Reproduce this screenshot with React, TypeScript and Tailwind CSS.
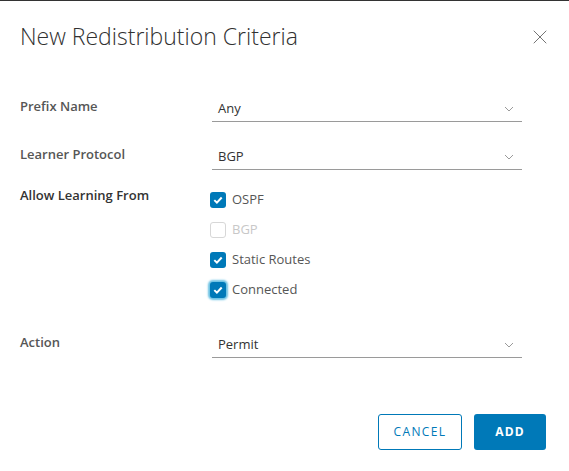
import { X } from 'lucide-react'

const font = { fontFamily: '"Open Sans", Lato, sans-serif' }

function Chevron() {
  return (
    <svg width="10" height="6" viewBox="0 0 10 6" className="text-[#9a9a9a]">
      <path d="M1 1l4 4 4-4" fill="none" stroke="currentColor" strokeWidth="1" />
    </svg>
  )
}

function Select({ value }: { value: string }) {
  return (
    <div className="flex h-[26px] w-[310px] items-center justify-between border-b border-[#9a9a9a] pl-[6px] pr-[8px] text-[13px] text-[#333]">
      <span>{value}</span>
      <Chevron />
    </div>
  )
}

function Checkbox({ label, checked, disabled, focused }: { label: string; checked?: boolean; disabled?: boolean; focused?: boolean }) {
  return (
    <div className="flex h-[30px] items-center gap-[6px]">
      <div
        className={
          'flex h-[16px] w-[16px] items-center justify-center rounded-[3px] ' +
          (checked ? 'bg-[#0079b8]' : 'border border-[#d7d7d7] bg-white') +
          (focused ? ' shadow-[0_0_2px_2px_#6bc1e3]' : '')
        }
      >
        {checked && (
          <svg width="10" height="8" viewBox="0 0 10 8">
            <path d="M1.3 4.1l2.6 2.5L8.7 1.5" fill="none" stroke="white" strokeWidth="2" />
          </svg>
        )}
      </div>
      <span className={'text-[13px] ' + (disabled ? 'text-[#c8c8c8]' : 'text-[#565656]')}>{label}</span>
    </div>
  )
}

export default function App() {
  return (
    <div className="h-[471px] w-[569px] border-t border-[#333] bg-white" style={font}>
      {/* Header */}
      <div className="flex h-[72px] items-center justify-between pl-5 pr-[17px]">
        <h2 className="-mt-[1px] text-[23px] font-light text-[#313131]">New Redistribution Criteria</h2>
        <X className="h-[24px] w-[24px] text-[#747474]" strokeWidth={1} />
      </div>

      {/* Form */}
      <div className="mt-[23px] flex flex-col pl-5">
        <div className="flex items-start">
          <label className="w-[192px] pt-[1px] text-[13px] font-semibold leading-[18px] text-[#565656]">Prefix Name</label>
          <Select value="Any" />
        </div>

        <div className="mt-[22px] flex items-start">
          <label className="w-[192px] pt-[1px] text-[13px] font-semibold leading-[18px] text-[#565656]">Learner Protocol</label>
          <Select value="BGP" />
        </div>

        <div className="mt-[15px] flex items-start">
          <label className="w-[190px] pt-[1px] text-[13px] font-semibold leading-[18px] text-[#333]">Allow Learning From</label>
          <div className="flex flex-col">
            <Checkbox label="OSPF" checked />
            <Checkbox label="BGP" disabled />
            <Checkbox label="Static Routes" checked />
            <Checkbox label="Connected" checked focused />
          </div>
        </div>

        <div className="mt-[27px] flex items-start">
          <label className="w-[192px] pt-[1px] text-[13px] font-semibold leading-[18px] text-[#565656]">Action</label>
          <Select value="Permit" />
        </div>
      </div>

      {/* Footer */}
      <div className="mt-[56px] flex justify-end gap-3 pr-[23px]">
        <button className="h-[36px] w-[84px] rounded-[3px] border border-[#0079b8] bg-white text-[12px] font-normal tracking-[1.4px] text-[#0079b8]">
          CANCEL
        </button>
        <button className="h-[36px] w-[72px] rounded-[3px] bg-[#0079b8] text-[12px] font-bold tracking-[1.2px] text-white">
          ADD
        </button>
      </div>
    </div>
  )
}
